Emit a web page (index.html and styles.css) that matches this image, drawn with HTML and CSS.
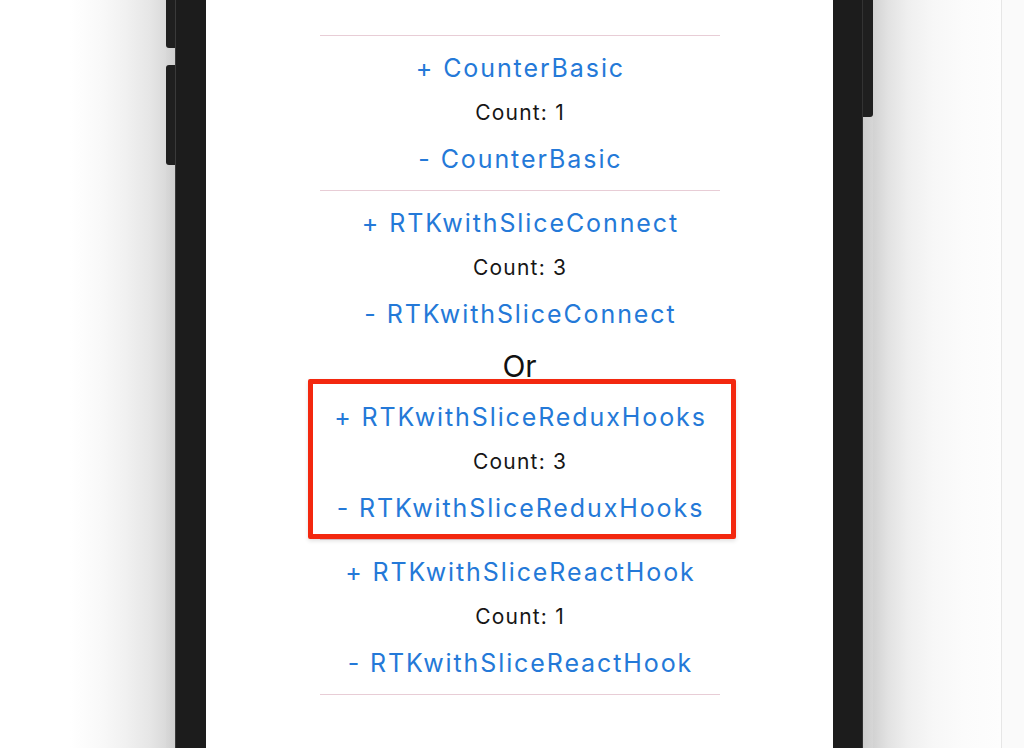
FILE: index.html
```html
<!DOCTYPE html>
<html lang="en">
<head>
<meta charset="utf-8">
<title>RTK Counter Demo</title>
<link rel="stylesheet" href="styles.css">
</head>
<body>
<div class="stage">
  <div class="gutter-left"></div>
  <div class="keys-left">
    <div class="key key-mute"></div>
    <div class="key key-volume"></div>
  </div>
  <div class="bezel bezel-left"></div>
  <main class="screen">
    <div class="rule"></div>
    <section class="group">
      <div class="action">+ CounterBasic</div>
      <div class="count">Count: 1</div>
      <div class="action minus">- CounterBasic</div>
    </section>
    <div class="rule"></div>
    <section class="group">
      <div class="action">+ RTKwithSliceConnect</div>
      <div class="count">Count: 3</div>
      <div class="action minus">- RTKwithSliceConnect</div>
      <div class="or">Or</div>
      <div class="action">+ RTKwithSliceReduxHooks</div>
      <div class="count">Count: 3</div>
      <div class="action minus">- RTKwithSliceReduxHooks</div>
    </section>
    <div class="rule"></div>
    <section class="group">
      <div class="action">+ RTKwithSliceReactHook</div>
      <div class="count">Count: 1</div>
      <div class="action minus">- RTKwithSliceReactHook</div>
    </section>
    <div class="rule"></div>
    <div class="highlight"></div>
  </main>
  <div class="bezel bezel-right"></div>
  <div class="keys-right">
    <div class="key key-power"></div>
  </div>
  <div class="gutter-right"></div>
  <div class="edge-line"></div>
  <div class="side-panel"></div>
</div>
</body>
</html>
```
FILE: styles.css
```css
html, body {
  margin: 0;
  padding: 0;
}
body {
  width: 1024px;
  height: 748px;
  overflow: hidden;
  background: #ffffff;
  font-family: Inter, "Liberation Sans", Arial, sans-serif;
}
.stage {
  display: flex;
  height: 748px;
}
.gutter-left {
  flex: 0 0 166px;
  background: linear-gradient(to right, #ffffff 0px, #ffffff 70px, #f9f9f9 100px, #f1f1f1 125px, #e6e6e6 150px, #dadada 166px);
}
.keys-left {
  flex: 0 0 9px;
  display: flex;
  flex-direction: column;
  gap: 17px;
  background: linear-gradient(to right, #d8d8d8, #cfcfcf);
}
.key {
  background: #1f1f1f;
}
.key-mute {
  height: 48px;
  border-radius: 0 0 0 3px;
}
.key-volume {
  height: 100px;
  border-radius: 3px 0 0 3px;
}
.keys-right {
  flex: 0 0 10px;
  background: linear-gradient(to right, #cdcdcd, #d6d6d6);
}
.key-power {
  height: 117px;
  border-radius: 0 0 3px 0;
}
.bezel {
  background: #1c1c1c;
}
.bezel-left {
  flex: 0 0 31px;
  border-left: 1px solid #3a3a3a;
  box-sizing: border-box;
}
.bezel-right {
  flex: 0 0 30px;
  border-right: 1px solid #333333;
  box-sizing: border-box;
}
.gutter-right {
  flex: 0 0 128px;
  background: linear-gradient(to right, #d2d2d2 0px, #e2e2e2 15px, #efefef 35px, #f7f7f7 60px, #fbfbfb 90px, #fdfdfd 128px);
}
.edge-line {
  flex: 0 0 1px;
  background: #e6e6e6;
}
.side-panel {
  flex: 1 1 auto;
  background: #fafafa;
}
.screen {
  position: relative;
  flex: 0 0 627px;
  background: #ffffff;
  display: flex;
  flex-direction: column;
  align-items: center;
  padding-top: 35px;
  box-sizing: border-box;
}
.rule {
  width: 400px;
  height: 1px;
  background: #e8cdd6;
}
.group {
  display: flex;
  flex-direction: column;
  align-items: center;
  padding: 9px 0 7px;
}
.action {
  height: 46px;
  line-height: 47px;
  font-size: 25px;
  letter-spacing: 1.9px;
  padding-left: 1.9px;
  color: #2479d8;
  white-space: nowrap;
}
.action.minus {
  height: 48px;
  line-height: 49px;
}
.count {
  height: 44px;
  line-height: 44px;
  font-size: 21px;
  letter-spacing: 1.2px;
  padding-left: 1.2px;
  color: #161616;
}
.or {
  height: 56px;
  line-height: 56px;
  font-size: 30px;
  color: #111111;
}
.highlight {
  position: absolute;
  left: 102px;
  top: 379px;
  width: 428px;
  height: 160px;
  box-sizing: border-box;
  border: 5px solid #f3280f;
  border-radius: 2px;
  box-shadow: 0 2px 4px rgba(0, 0, 0, 0.12);
}
```
